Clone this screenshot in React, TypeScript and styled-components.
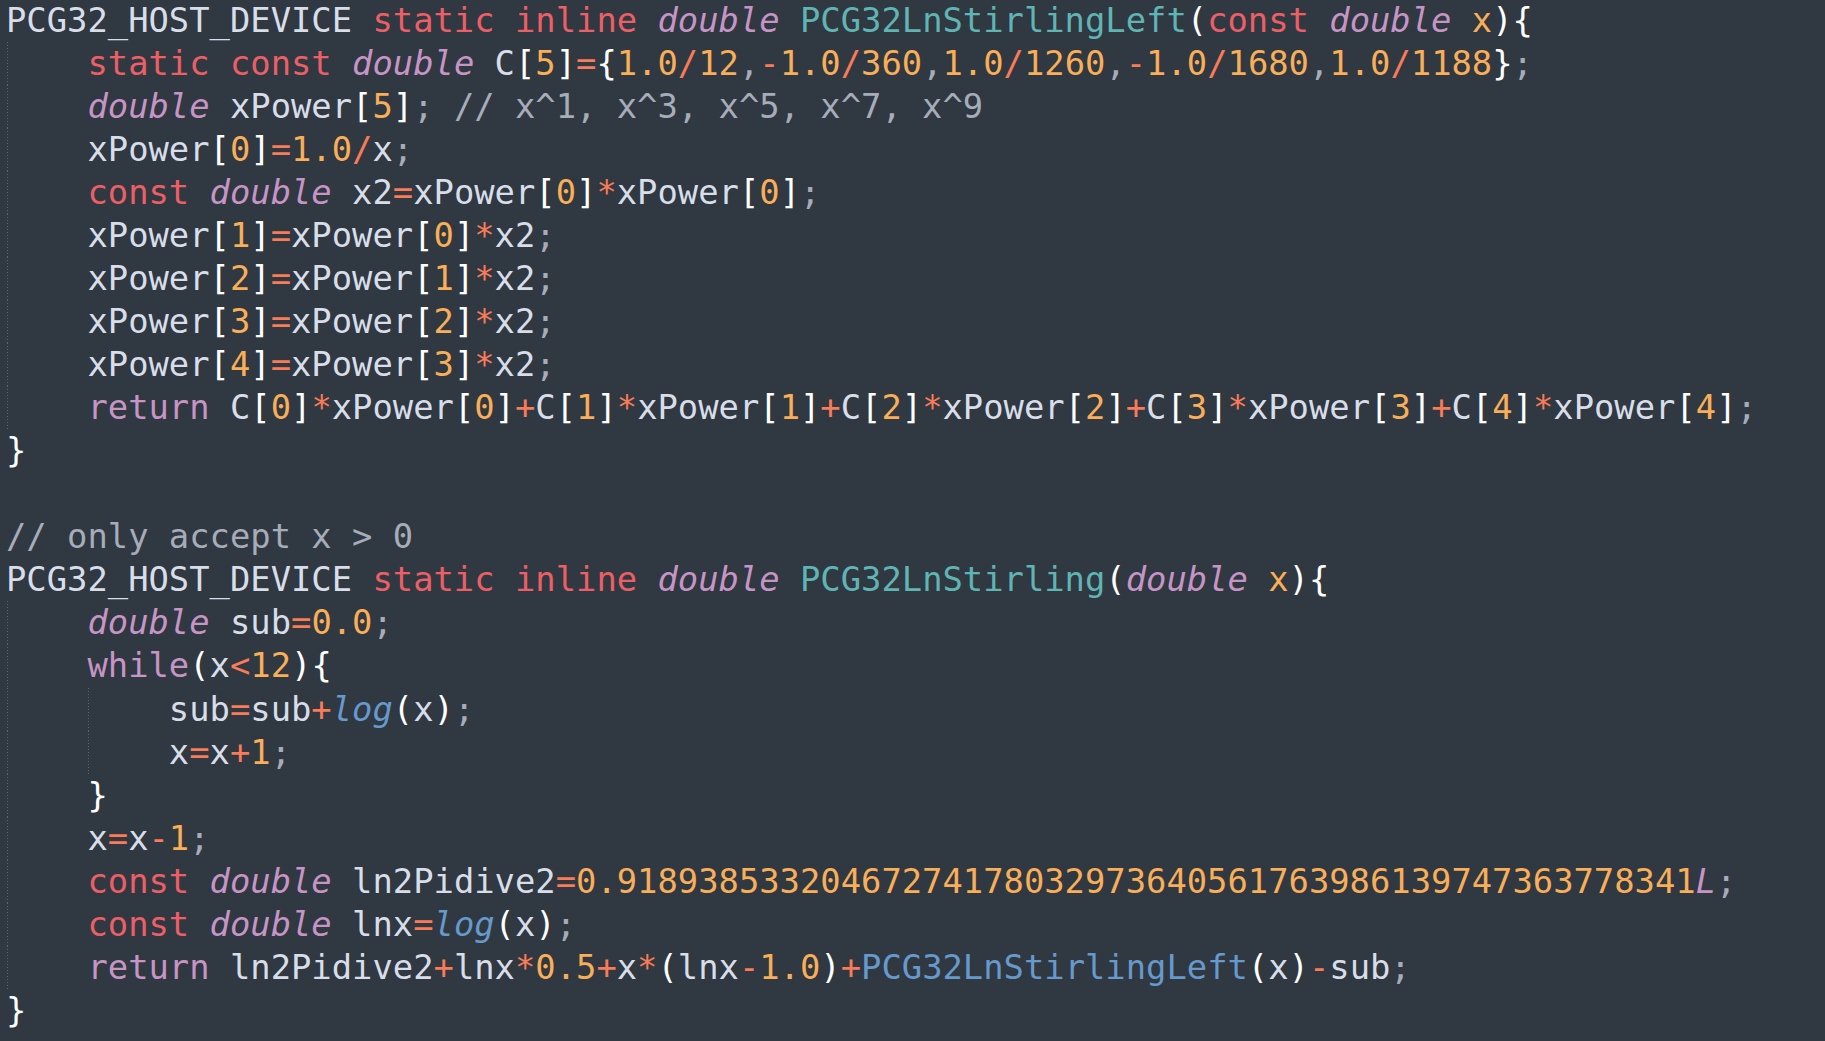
import React from "react";
import styled, { createGlobalStyle, css } from "styled-components";

type Kind =
  | "id"
  | "kw"
  | "ty"
  | "ctl"
  | "fn"
  | "call"
  | "calli"
  | "num"
  | "op"
  | "br"
  | "pu"
  | "cm"
  | "par"
  | "suf"
  | "ws";

const COLORS: Record<Kind, string> = {
  id: "#d8dee9",
  kw: "#ec5f66",
  ty: "#c695c6",
  ctl: "#c695c6",
  fn: "#5fb4b4",
  call: "#6699cc",
  calli: "#6699cc",
  num: "#f9ae58",
  op: "#f97b58",
  br: "#ffffff",
  pu: "#a6acb9",
  cm: "#a6acb9",
  par: "#f9ae58",
  suf: "#c695c6",
  ws: "#d8dee9",
};

const ITALIC: Partial<Record<Kind, boolean>> = { ty: true, calli: true, suf: true };

const Global = createGlobalStyle`
  html, body {
    margin: 0;
    padding: 0;
    background: #303841;
    height: 100%;
    overflow: hidden;
  }
  #root { min-height: 100%; }
`;

const Editor = styled.main`
  box-sizing: border-box;
  width: 1825px;
  height: 1041px;
  background: #303841;
  padding: 0 0 0 6px;
  overflow: hidden;
  font-family: "DejaVu Sans Mono", "Liberation Mono", monospace;
  font-size: 33.82px;
  color: #d8dee9;
`;

const Lines = styled.div`
  display: flex;
  flex-direction: column;
  margin-top: -1px;
`;

const Row = styled.div`
  display: flex;
  flex: none;
  height: 43.04px;
  line-height: 43.04px;
  white-space: pre;
`;

const Indent = styled.span<{ $guide: boolean }>`
  flex: none;
  width: 4ch;
  align-self: stretch;
  ${(p) =>
    p.$guide &&
    css`
      background-image: linear-gradient(to bottom, rgba(166, 172, 185, 0.38) 1px, transparent 1px);
      background-size: 1px 3px;
      background-repeat: repeat-y;
      background-position: 1px 0;
    `}
`;

const Code = styled.span`
  white-space: pre;
`;

const Tok = styled.span<{ $kind: Kind }>`
  color: ${(p) => COLORS[p.$kind]};
  font-style: ${(p) => (ITALIC[p.$kind] ? "italic" : "normal")};
`;

interface Line {
  level: number;
  guides: number;
  code: string;
}

const LINES: Line[] = [
  { level: 0, guides: 0, code: "PCG32_HOST_DEVICE static inline double PCG32LnStirlingLeft(const double x){" },
  { level: 1, guides: 1, code: "static const double C[5]={1.0/12,-1.0/360,1.0/1260,-1.0/1680,1.0/1188};" },
  { level: 1, guides: 1, code: "double xPower[5]; // x^1, x^3, x^5, x^7, x^9" },
  { level: 1, guides: 1, code: "xPower[0]=1.0/x;" },
  { level: 1, guides: 1, code: "const double x2=xPower[0]*xPower[0];" },
  { level: 1, guides: 1, code: "xPower[1]=xPower[0]*x2;" },
  { level: 1, guides: 1, code: "xPower[2]=xPower[1]*x2;" },
  { level: 1, guides: 1, code: "xPower[3]=xPower[2]*x2;" },
  { level: 1, guides: 1, code: "xPower[4]=xPower[3]*x2;" },
  { level: 1, guides: 1, code: "return C[0]*xPower[0]+C[1]*xPower[1]+C[2]*xPower[2]+C[3]*xPower[3]+C[4]*xPower[4];" },
  { level: 0, guides: 0, code: "}" },
  { level: 0, guides: 0, code: "" },
  { level: 0, guides: 0, code: "// only accept x > 0" },
  { level: 0, guides: 0, code: "PCG32_HOST_DEVICE static inline double PCG32LnStirling(double x){" },
  { level: 1, guides: 1, code: "double sub=0.0;" },
  { level: 1, guides: 1, code: "while(x<12){" },
  { level: 2, guides: 2, code: "sub=sub+log(x);" },
  { level: 2, guides: 2, code: "x=x+1;" },
  { level: 1, guides: 1, code: "}" },
  { level: 1, guides: 1, code: "x=x-1;" },
  { level: 1, guides: 1, code: "const double ln2Pidive2=0.91893853320467274178032973640561763986139747363778341L;" },
  { level: 1, guides: 1, code: "const double lnx=log(x);" },
  { level: 1, guides: 1, code: "return ln2Pidive2+lnx*0.5+x*(lnx-1.0)+PCG32LnStirlingLeft(x)-sub;" },
  { level: 0, guides: 0, code: "}" },
];

const KEYWORDS = new Set(["static", "inline", "const"]);
const TYPES = new Set(["double"]);
const CONTROL = new Set(["return", "while"]);
const BUILTINS = new Set(["log"]);

function tokenize(code: string): [Kind, string][] {
  const out: [Kind, string][] = [];
  const re = /(\/\/.*$)|([A-Za-z_][A-Za-z0-9_]*)|(\d+(?:\.\d+)?)|([=+\-*/<>^])|([()\[\]{}])|([;,.])|(\s+)/y;
  const isDef = code.startsWith("PCG32_HOST_DEVICE");
  let pos = 0;
  while (pos < code.length) {
    re.lastIndex = pos;
    const m = re.exec(code);
    if (!m) {
      out.push(["id", code[pos]]);
      pos += 1;
      continue;
    }
    const text = m[0];
    let kind: Kind = "id";
    if (m[1]) kind = "cm";
    else if (m[2]) {
      const prev = out.length ? out[out.length - 1] : null;
      const next = code.slice(pos + text.length).trimStart()[0];
      if (prev && prev[0] === "num" && text === "L") kind = "suf";
      else if (KEYWORDS.has(text)) kind = "kw";
      else if (TYPES.has(text)) kind = "ty";
      else if (CONTROL.has(text)) kind = "ctl";
      else if (BUILTINS.has(text)) kind = "calli";
      else if (next === "(") kind = isDef ? "fn" : "call";
      else if (isDef && text === "x") kind = "par";
      else kind = "id";
    } else if (m[3]) kind = "num";
    else if (m[4]) kind = "op";
    else if (m[5]) kind = "br";
    else if (m[6]) kind = "pu";
    else kind = "ws";
    out.push([kind, text]);
    pos += text.length;
  }
  return out;
}

function CodeLine({ line }: { line: Line }) {
  const indents = Array.from({ length: line.level }, (_, i) => i);
  return (
    <Row>
      {indents.map((i) => (
        <Indent key={i} $guide={i < line.guides} />
      ))}
      <Code>
        {tokenize(line.code).map(([kind, text], i) => (
          <Tok key={i} $kind={kind}>
            {text}
          </Tok>
        ))}
      </Code>
    </Row>
  );
}

export default function App() {
  return (
    <>
      <Global />
      <Editor>
        <Lines>
          {LINES.map((line, i) => (
            <CodeLine key={i} line={line} />
          ))}
        </Lines>
      </Editor>
    </>
  );
}
